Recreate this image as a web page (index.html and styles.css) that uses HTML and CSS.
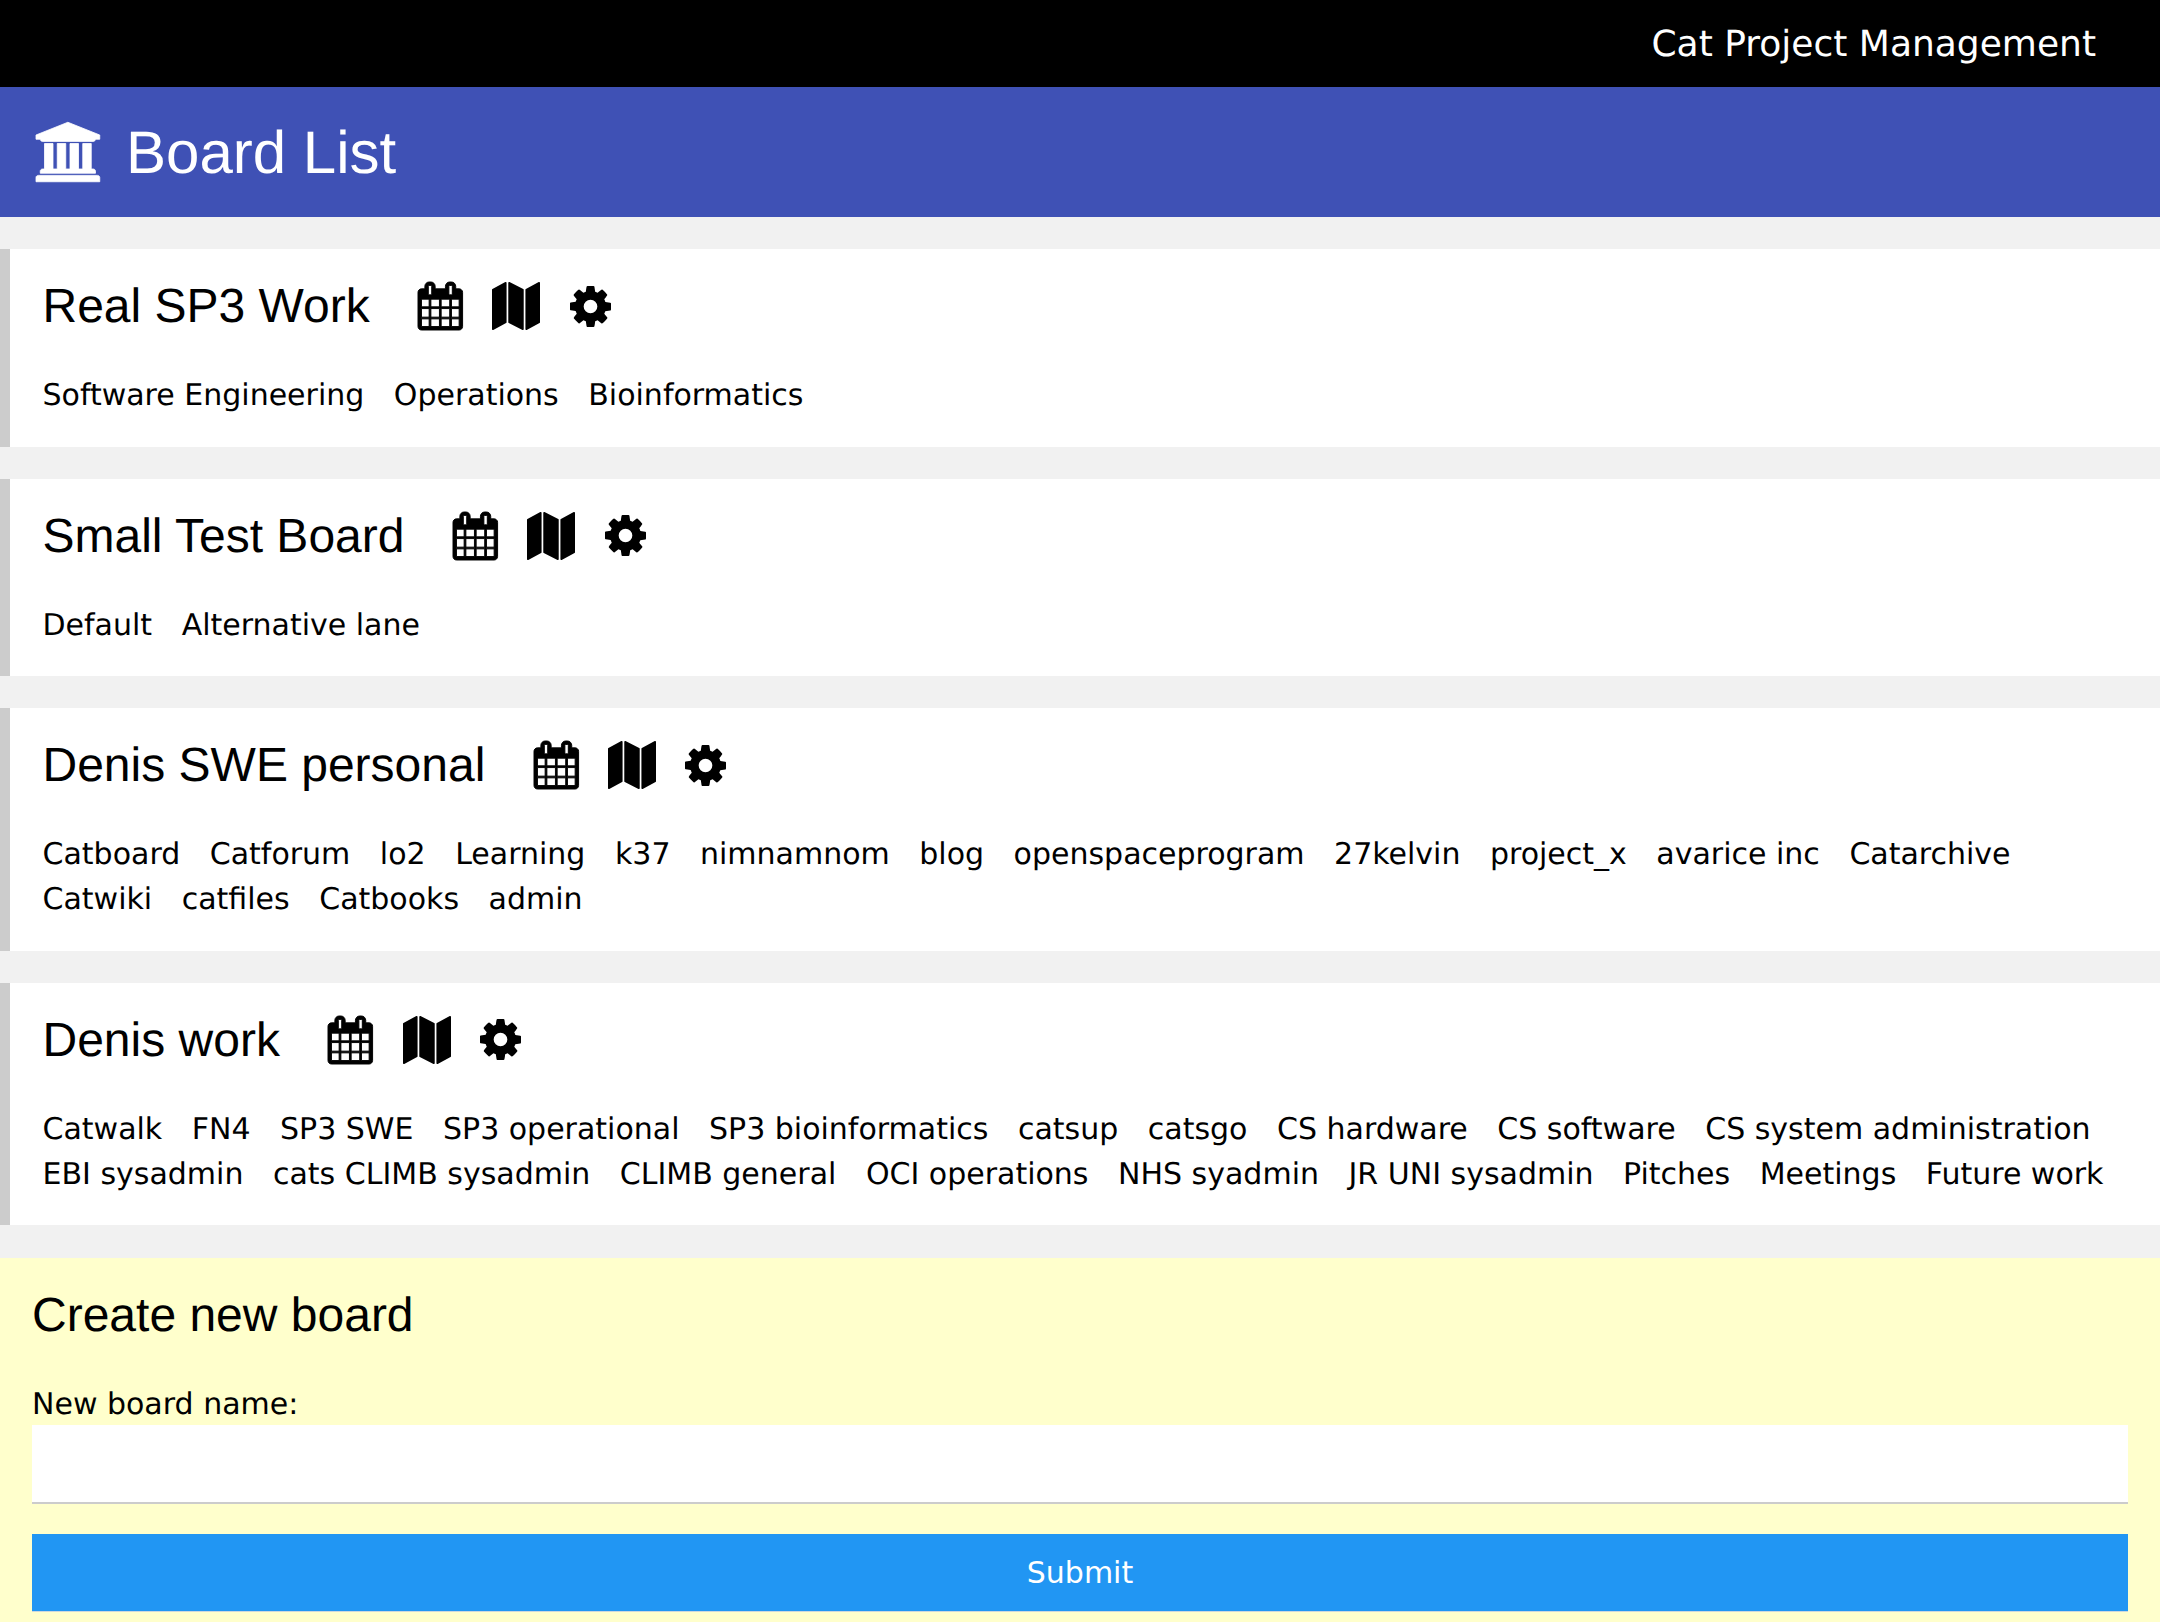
FILE: index.html
```html
<!DOCTYPE html>
<html lang="en">
<head>
<meta charset="utf-8">
<title>Board List</title>
<link rel="stylesheet" href="styles.css">
</head>
<body>
<svg class="defs" width="0" height="0" aria-hidden="true">
  <symbol id="i-cal" viewBox="64 0 1664 1792" overflow="visible"><path d="M192 1664h288v-288h-288v288zm352 0h320v-288h-320v288zm-352-352h288v-320h-288v320zm352 0h320v-320h-320v320zm-352-384h288v-288h-288v288zm736 736h320v-288h-320v288zm-384-736h320v-288h-320v288zm768 736h288v-288h-288v288zm-384-352h320v-320h-320v320zm-352-864v-288q0-13-9.500-22.500t-22.500-9.500h-64q-13 0-22.500 9.500t-9.500 22.500v288q0 13 9.500 22.500t22.500 9.500h64q13 0 22.500-9.500t9.500-22.500zm736 864h288v-320h-288v320zm-384-384h320v-288h-320v288zm384 0h288v-288h-288v288zm32-480v-288q0-13-9.500-22.500t-22.500-9.500h-64q-13 0-22.500 9.500t-9.500 22.500v288q0 13 9.500 22.500t22.500 9.500h64q13 0 22.500-9.500t9.500-22.500zm384-64v1280q0 52-38 90t-90 38h-1408q-52 0-90-38t-38-90v-1280q0-52 38-90t90-38h128v-96q0-66 47-113t113-47h64q66 0 113 47t47 113v96h384v-96q0-66 47-113t113-47h64q66 0 113 47t47 113v96h128q52 0 90 38t38 90z"/></symbol>
  <symbol id="i-map" viewBox="0 0 1792 1792"><path d="M512 0q13 0 22.500 9.500t9.500 22.500v1472q0 20-17 28l-480 256q-7 4-15 4-13 0-22.500-9.500t-9.500-22.500v-1472q0-20 17-28l480-256q7-4 15-4zm1248 0q13 0 22.500 9.500t9.500 22.500v1472q0 20-17 28l-480 256q-7 4-15 4-13 0-22.500-9.500t-9.500-22.500v-1472q0-20 17-28l480-256q7-4 15-4zm-1120 0q8 0 14 3l512 256q18 10 18 29v1472q0 13-9.500 22.500t-22.500 9.500q-8 0-14-3l-512-256q-18-10-18-29v-1472q0-13 9.500-22.500t22.500-9.500z"/></symbol>
  <symbol id="i-cog" viewBox="128 128 1536 1536"><path d="M1152 896q0-106-75-181t-181-75-181 75-75 181 75 181 181 75 181-75 75-181zm512-109v222q0 12-8 23t-20 13l-185 28q-19 54-39 91 35 50 107 138 10 12 10 25t-9 23q-27 37-99 108t-94 71q-12 0-26-9l-138-108q-44 23-91 38-16 136-29 186-7 28-36 28h-222q-14 0-24.500-8.500t-11.500-21.500l-28-184q-49-16-90-37l-141 107q-10 9-25 9-14 0-25-11-126-114-165-168-7-10-7-23 0-12 8-23 15-21 51-66.500t54-70.500q-27-50-41-99l-183-27q-13-2-21-12.500t-8-23.500v-222q0-12 8-23t19-13l186-28q14-46 39-92-40-57-107-138-10-12-10-24 0-10 9-23 26-36 98.500-107.500t94.500-71.500q13 0 26 10l138 107q44-23 91-38 16-136 29-186 7-28 36-28h222q14 0 24.500 8.500t11.500 21.500l28 184q49 16 90 37l142-107q9-9 24-9 13 0 25 10 129 119 165 170 7 8 7 22 0 12-8 23-15 21-51 66.500t-54 70.500q26 50 41 98l183 28q13 2 21 12.500t8 23.500z"/></symbol>
</svg>

<header class="topbar"><span class="brand">Cat Project Management</span></header>

<div class="banner">
  <svg class="bank" viewBox="0 0 2048 1792" aria-hidden="true"><path d="M960 0l960 384v128h-128q0 26-20.500 45t-48.500 19h-1526q-28 0-48.500-19t-20.500-45h-128v-128zm-704 640h256v768h128v-768h256v768h128v-768h256v768h128v-768h256v768h59q28 0 48.500 19t20.500 45v64h-1664v-64q0-26 20.500-45t48.500-19h59v-768zm1595 960q28 0 48.500 19t20.500 45v128h-1920v-128q0-26 20.500-45t48.500-19h1782z"/></svg>
  <h2 class="banner-title">Board List</h2>
</div>

<main class="boards">
  <section class="board">
    <div class="board-head">
      <h3 class="board-title">Real SP3 Work</h3>
      <div class="tools">
        <svg class="ic ic-cal"><use href="#i-cal"/></svg>
        <svg class="ic ic-map"><use href="#i-map"/></svg>
        <svg class="ic ic-cog"><use href="#i-cog"/></svg>
      </div>
    </div>
    <div class="lanes">
      <a class="lane">Software Engineering</a><a class="lane">Operations</a><a class="lane">Bioinformatics</a>
    </div>
  </section>

  <section class="board">
    <div class="board-head">
      <h3 class="board-title">Small Test Board</h3>
      <div class="tools">
        <svg class="ic ic-cal"><use href="#i-cal"/></svg>
        <svg class="ic ic-map"><use href="#i-map"/></svg>
        <svg class="ic ic-cog"><use href="#i-cog"/></svg>
      </div>
    </div>
    <div class="lanes">
      <a class="lane">Default</a><a class="lane">Alternative lane</a>
    </div>
  </section>

  <section class="board">
    <div class="board-head">
      <h3 class="board-title">Denis SWE personal</h3>
      <div class="tools">
        <svg class="ic ic-cal"><use href="#i-cal"/></svg>
        <svg class="ic ic-map"><use href="#i-map"/></svg>
        <svg class="ic ic-cog"><use href="#i-cog"/></svg>
      </div>
    </div>
    <div class="lanes">
      <a class="lane">Catboard</a><a class="lane">Catforum</a><a class="lane">lo2</a><a class="lane">Learning</a><a class="lane">k37</a><a class="lane">nimnamnom</a><a class="lane">blog</a><a class="lane">openspaceprogram</a><a class="lane">27kelvin</a><a class="lane">project_x</a><a class="lane">avarice inc</a><a class="lane">Catarchive</a><a class="lane">Catwiki</a><a class="lane">catfiles</a><a class="lane">Catbooks</a><a class="lane">admin</a>
    </div>
  </section>

  <section class="board">
    <div class="board-head">
      <h3 class="board-title">Denis work</h3>
      <div class="tools">
        <svg class="ic ic-cal"><use href="#i-cal"/></svg>
        <svg class="ic ic-map"><use href="#i-map"/></svg>
        <svg class="ic ic-cog"><use href="#i-cog"/></svg>
      </div>
    </div>
    <div class="lanes">
      <a class="lane">Catwalk</a><a class="lane">FN4</a><a class="lane">SP3 SWE</a><a class="lane">SP3 operational</a><a class="lane">SP3 bioinformatics</a><a class="lane">catsup</a><a class="lane">catsgo</a><a class="lane">CS hardware</a><a class="lane">CS software</a><a class="lane">CS system administration</a><a class="lane">EBI sysadmin</a><a class="lane">cats CLIMB sysadmin</a><a class="lane">CLIMB general</a><a class="lane">OCI operations</a><a class="lane">NHS syadmin</a><a class="lane">JR UNI sysadmin</a><a class="lane">Pitches</a><a class="lane">Meetings</a><a class="lane">Future work</a>
    </div>
  </section>
</main>

<form class="create">
  <h3 class="create-title">Create new board</h3>
  <label class="field-label" for="name">New board name:</label>
  <input class="field" id="name" type="text">
  <button class="submit" type="button">Submit</button>
</form>
</body>
</html>
```
FILE: styles.css
```css
* { box-sizing: border-box; }
html, body { margin: 0; padding: 0; }
body {
  background: #f1f1f1;
  color: #000;
  font-family: "DejaVu Sans", sans-serif;
  font-size: 30px;
  line-height: 45px;
  text-rendering: geometricPrecision;
}
.defs { position: absolute; }
.topbar {
  background: #000;
  color: #fff;
  height: 87px;
  display: flex;
  justify-content: flex-end;
  align-items: center;
  padding: 2px 64px 0 0;
}
.brand { font-size: 36px; line-height: 54px; }
.banner {
  background: #3f51b5;
  color: #fff;
  height: 130px;
  display: flex;
  align-items: center;
  gap: 22px;
  padding-left: 36px;
}
.bank { width: 68px; height: 60px; fill: #fff; stroke: #fff; stroke-width: 24; overflow: visible; }
.banner-title {
  margin: 0;
  padding-top: 2px;
  font: 400 60px/88px "Liberation Sans", Arial, sans-serif;
}
.boards {
  display: flex;
  flex-direction: column;
  gap: 32px;
  padding: 32px 0 32.5px;
}
.board {
  background: #fff;
  border-left: 10px solid #ccc;
  padding: 20px 32px 29.5px 32.5px;
}
.board-head {
  display: flex;
  align-items: center;
  gap: 48.5px;
  margin-bottom: 31px;
}
.board-title {
  margin: 0;
  padding-top: 3px;
  font: 400 48px/69px "Liberation Sans", Arial, sans-serif;
}
.tools { display: flex; align-items: center; gap: 29.5px; padding-top: 2px; }
.ic { display: block; height: 48px; fill: #000; overflow: visible; }
.ic-cal { width: 44.6px; stroke: #000; stroke-width: 36; }
.ic-map { width: 48px; }
.ic-cog { width: 41px; height: 41px; }
.lanes { display: flex; flex-wrap: wrap; column-gap: 29.53px; }
.lane { white-space: nowrap; padding-top: 2px; line-height: 43px; }
.create {
  background: #ffc;
  padding: 20px 32px 10px;
}
.create-title {
  margin: 0 0 30px;
  padding-top: 3px;
  font: 400 48px/69px "Liberation Sans", Arial, sans-serif;
}
.field-label { display: block; padding-top: 4px; line-height: 41px; }
.field {
  display: block;
  width: 100%;
  height: 79px;
  margin-bottom: 30px;
  padding: 16px;
  background: #fff;
  border: 0;
  border-bottom: 2px solid #ccc;
  border-radius: 0;
  font: inherit;
  outline: none;
}
.submit {
  display: block;
  width: 100%;
  height: 78px;
  padding: 0;
  background: #2196f3;
  color: #fff;
  border: 0;
  border-bottom: 1px solid #cfd8dc;
  border-radius: 0;
  font: inherit;
  text-align: center;
}
```
